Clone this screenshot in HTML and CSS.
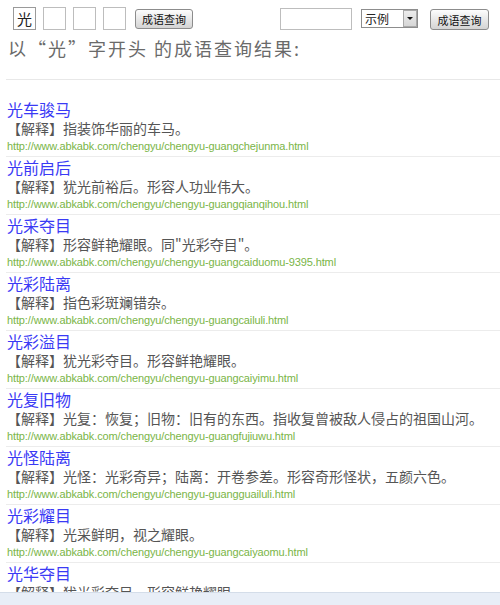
FILE: index.html
```html
<!DOCTYPE html>
<html lang="zh-CN">
<head>
<meta charset="utf-8">
<title>以“光”字开头的成语</title>
<link rel="stylesheet" href="styles.css">
</head>
<body>
<div class="toolbar">
  <div class="group left">
    <input class="cell" type="text" value="光">
    <input class="cell" type="text" value="">
    <input class="cell" type="text" value="">
    <input class="cell" type="text" value="">
    <button class="btn first">成语查询</button>
  </div>
  <div class="group right">
    <input class="word" type="text" value="">
    <span class="select-wrap">
      <select class="sel"><option>示例</option></select>
      <span class="arrow"><span class="tri"></span></span>
    </span>
    <button class="btn second">成语查询</button>
  </div>
</div>
<h2 class="heading">以“光”字开头 的成语查询结果:</h2>
<div class="rule"></div>
<ul class="list">
  <li class="item"><a class="title">光车骏马</a><p class="expl">【解释】指装饰华丽的车马。</p><p class="url">http://www.abkabk.com/chengyu/chengyu-guangchejunma.html</p></li>
  <li class="item"><a class="title">光前启后</a><p class="expl">【解释】犹光前裕后。形容人功业伟大。</p><p class="url">http://www.abkabk.com/chengyu/chengyu-guangqianqihou.html</p></li>
  <li class="item"><a class="title">光采夺目</a><p class="expl">【解释】形容鲜艳耀眼。同"光彩夺目"。</p><p class="url">http://www.abkabk.com/chengyu/chengyu-guangcaiduomu-9395.html</p></li>
  <li class="item"><a class="title">光彩陆离</a><p class="expl">【解释】指色彩斑斓错杂。</p><p class="url">http://www.abkabk.com/chengyu/chengyu-guangcailuli.html</p></li>
  <li class="item"><a class="title">光彩溢目</a><p class="expl">【解释】犹光彩夺目。形容鲜艳耀眼。</p><p class="url">http://www.abkabk.com/chengyu/chengyu-guangcaiyimu.html</p></li>
  <li class="item"><a class="title">光复旧物</a><p class="expl">【解释】光复：恢复；旧物：旧有的东西。指收复曾被敌人侵占的祖国山河。</p><p class="url">http://www.abkabk.com/chengyu/chengyu-guangfujiuwu.html</p></li>
  <li class="item"><a class="title">光怪陆离</a><p class="expl">【解释】光怪：光彩奇异；陆离：开卷参差。形容奇形怪状，五颜六色。</p><p class="url">http://www.abkabk.com/chengyu/chengyu-guangguailuli.html</p></li>
  <li class="item"><a class="title">光彩耀目</a><p class="expl">【解释】光采鲜明，视之耀眼。</p><p class="url">http://www.abkabk.com/chengyu/chengyu-guangcaiyaomu.html</p></li>
  <li class="item"><a class="title">光华夺目</a><p class="expl">【解释】犹光彩夺目。形容鲜艳耀眼。</p><p class="url">http://www.abkabk.com/chengyu/chengyu-guanghuaduomu.html</p></li>
</ul>
<div class="statusbar"></div>
</body>
</html>
```

FILE: styles.css
```css
html, body {
  margin: 0;
  padding: 0;
  overflow: hidden;
  background: #fff;
}
body {
  font-family: "Noto Sans CJK SC", "Liberation Sans", sans-serif;
  color: #555;
}
.toolbar {
  display: flex;
  align-items: flex-start;
  justify-content: space-between;
  padding: 7px 11px 0 13px;
  height: 29px;
  box-sizing: content-box;
}
.group {
  display: flex;
  align-items: flex-start;
}
.cell {
  width: 23px;
  height: 23px;
  box-sizing: border-box;
  border: 1px solid #bdbdbd;
  margin: 0 7px 0 0;
  padding: 0;
  font: 15px/21px "Noto Sans CJK SC", sans-serif;
  color: #222;
  text-align: center;
  background: #fff;
  outline: none;
}
.cell:first-child {
  border-color: #9a9a9a;
}
.btn {
  height: 20px;
  box-sizing: border-box;
  border: 1px solid #8c8c8c;
  border-radius: 3px;
  background: linear-gradient(#fdfdfd, #e6e6e6 55%, #d4d4d4);
  font: 11px/16px "Noto Sans CJK SC", sans-serif;
  color: #111;
  padding: 0 6px;
  margin-top: 2px;
  width: 58px;
}
.btn.first {
  margin-left: 2px;
}
.btn.second {
  width: 59px;
  height: 21px;
}
.word {
  width: 72px;
  height: 22px;
  box-sizing: border-box;
  border: 1px solid #bdbdbd;
  margin: 1px 9px 0 0;
  padding: 0;
  background: #fff;
  outline: none;
}
.select-wrap {
  position: relative;
  display: block;
  width: 57px;
  height: 19px;
  margin: 2px 12px 0 0;
}
.sel {
  display: block;
  appearance: none;
  -webkit-appearance: none;
  width: 57px;
  height: 19px;
  box-sizing: border-box;
  border: 1px solid #8d8d8d;
  border-radius: 0;
  background: #fff;
  font: 12px/17px "Noto Sans CJK SC", sans-serif;
  color: #222;
  padding: 0 0 0 3px;
  margin: 0;
  outline: none;
}
.arrow {
  position: absolute;
  right: 1px;
  top: 1px;
  width: 14px;
  height: 17px;
  box-sizing: border-box;
  background: linear-gradient(#ececec, #d6d6d6);
  border: 1px solid #a9a9a9;
  display: flex;
  align-items: center;
  justify-content: center;
  pointer-events: none;
}
.tri {
  width: 0;
  height: 0;
  border-left: 3px solid transparent;
  border-right: 3px solid transparent;
  border-top: 3px solid #111;
}
.heading {
  margin: 0;
  padding: 0 0 0 8px;
  font: normal 18px/24px "Noto Sans CJK SC", sans-serif;
  letter-spacing: 2px;
  color: #6a6a6a;
  height: 43px;
}
.rule {
  height: 1px;
  background: #e8e8e8;
  margin-left: 6px;
}
.list {
  list-style: none;
  margin: 19px 0 0 6px;
  padding: 0;
}
.item {
  padding: 0 0 2px 1px;
  border-bottom: 1px solid #ececec;
}
.title {
  display: block;
  font: 16px/20px "Noto Sans CJK SC", sans-serif;
  color: #3a3af5;
  text-decoration: none;
}
.expl {
  margin: 0;
  font: 14px/19px "Noto Sans CJK SC", sans-serif;
  color: #555;
  white-space: nowrap;
}
.url {
  margin: 0;
  font: 11px/16px "Liberation Sans", Arial, sans-serif;
  letter-spacing: -0.12px;
  color: #7ab547;
  white-space: nowrap;
}
.statusbar {
  position: fixed;
  left: 0;
  right: 0;
  bottom: 0;
  height: 12px;
  background: #e8eef7;
  border-top: 1px solid #d4dde9;
}
```
